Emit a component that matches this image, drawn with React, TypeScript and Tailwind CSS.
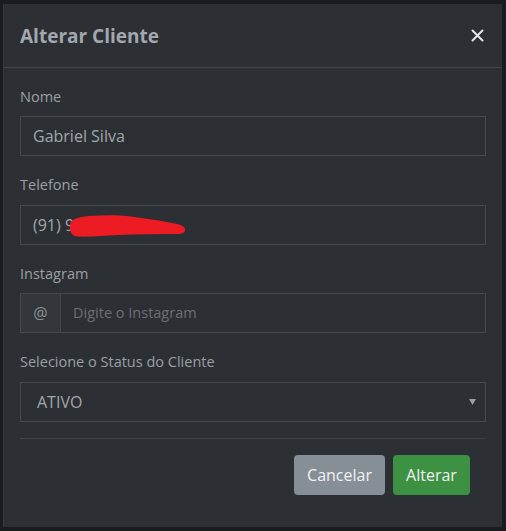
const FONT = "font-['Open_Sans','Noto_Sans',sans-serif]";

function Field({ label, children }: { label: string; children: React.ReactNode }) {
  return (
    <div className="mb-[18px]">
      <label className="block leading-[22.5px] mb-[8px] text-[14.5px] text-[#9ba0a6]">{label}</label>
      {children}
    </div>
  );
}

export default function App() {
  return (
    <div className={`w-[506px] h-[531px] bg-[#1b1c1f] pt-[4px] pl-[3px] ${FONT}`}>
      <div className="w-[499px] h-[523px] bg-[#2c2f34] border-l border-[#35383d] flex flex-col">
        {/* Header */}
        <div className="h-[64px] flex items-center justify-between pl-[16px] pr-[17px] border-b border-[#42464b]">
          <h5 className="mt-[2px] text-[19px] font-bold text-[#a3a8ae]">Alterar Cliente</h5>
          <svg width="13" height="13" viewBox="0 0 13 13" className="mr-[1px]">
            <path d="M1.5 1.5 L11.5 11.5 M11.5 1.5 L1.5 11.5" stroke="#e4e6e8" strokeWidth="2" strokeLinecap="round" />
          </svg>
        </div>

        {/* Body */}
        <div className="px-[16px] pt-[17.5px]">
          <Field label="Nome">
            <div className="h-[40px] border border-[#45494e] flex items-center px-[12px] text-[16px] text-[#a2a7ad]">
              Gabriel Silva
            </div>
          </Field>

          <Field label="Telefone">
            <div className="relative h-[40px] border border-[#45494e] flex items-center px-[12px] text-[16px] text-[#a2a7ad]">
              (91) 9
              <svg className="absolute left-[48px] top-[9px]" width="122" height="24" viewBox="0 0 122 24">
                <path
                  d="M1 12 C 0 5, 8 2, 20 1 C 35 0, 50 0, 62 1.5 C 80 4, 95 6, 108 9 C 118 11, 119 18, 110 19 C 90 19, 70 19, 50 20 C 35 21, 20 22, 8 21.5 C 2 20.5, 1 16, 1 12 Z"
                  fill="#ed1c24"
                />
              </svg>
            </div>
          </Field>

          <Field label="Instagram">
            <div className="h-[40px] border border-[#45494e] flex">
              <div className="w-[40px] bg-[#33363b] border-r border-[#45494e] flex items-center justify-center text-[16px] text-[#8c9196]">
                @
              </div>
              <div className="flex-1 flex items-center px-[12px] text-[14.5px] text-[#6b7076]">
                Digite o Instagram
              </div>
            </div>
          </Field>

          <Field label="Selecione o Status do Cliente">
            <div className="h-[40px] border border-[#45494e] flex items-center justify-between pl-[16px] pr-[9px] text-[16px] text-[#a2a7ad]">
              ATIVO
              <svg width="7" height="6" viewBox="0 0 7 6">
                <path d="M0 0 H7 L3.5 6 Z" fill="#9a9ea3" />
              </svg>
            </div>
          </Field>

          <div className="-mt-[1.5px] border-t border-[#3f4348]" />

          <div className="flex justify-end gap-[8px] pt-[16px] pr-[16px]">
            <button className="h-[40px] w-[91px] rounded-[4px] bg-[#868e96] text-[16px] text-[#f1f2f3]">Cancelar</button>
            <button className="h-[40px] w-[77px] rounded-[4px] bg-[#3d9142] text-[16px] text-[#f1f2f3]">Alterar</button>
          </div>
        </div>
      </div>
    </div>
  );
}
